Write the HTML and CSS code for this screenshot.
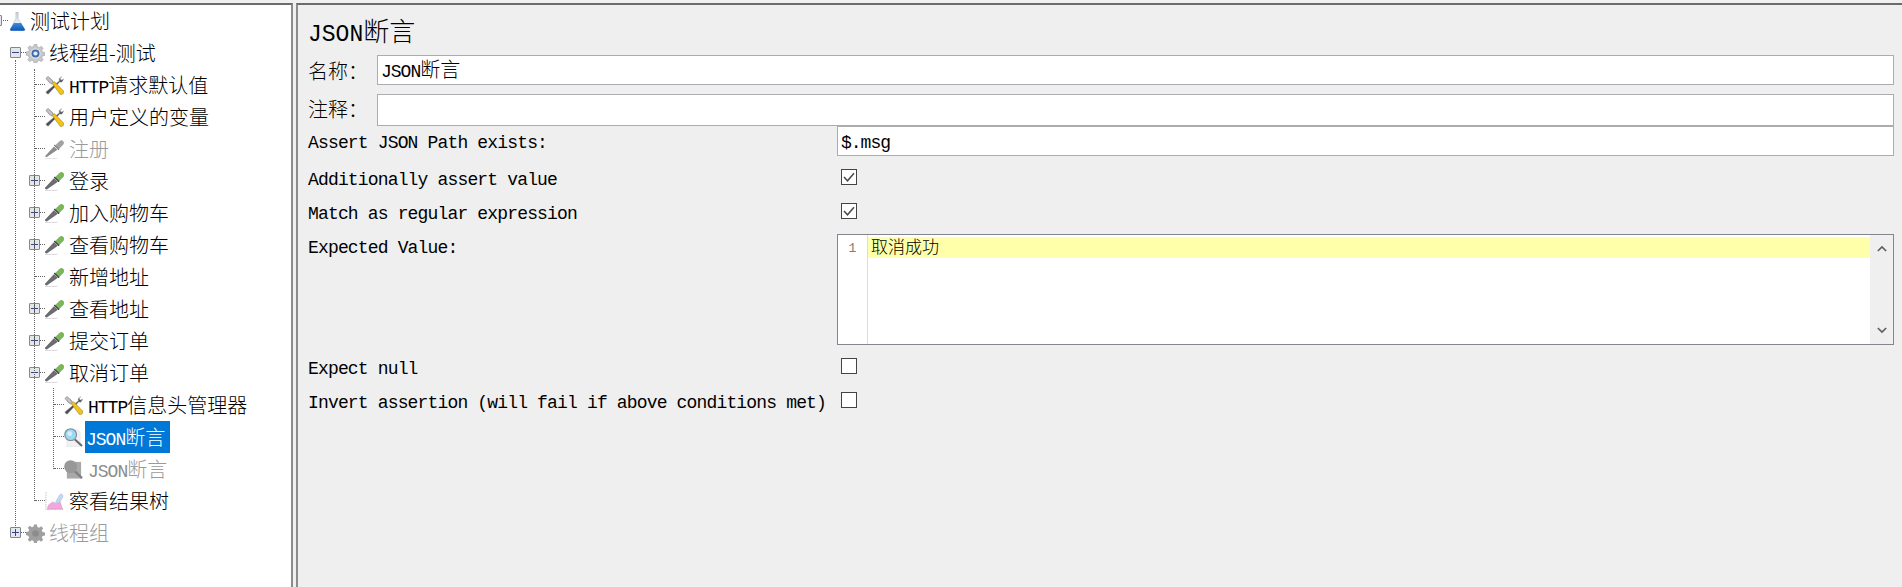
FILE: index.html
```html
<!DOCTYPE html>
<html lang="zh-CN">
<head>
<meta charset="utf-8">
<title>JSON断言</title>
<link rel="stylesheet" href="styles.css">
</head>
<body>
<svg class="defs" width="0" height="0" aria-hidden="true">
  <defs>
    <linearGradient id="glass" x1="0" y1="0" x2="0" y2="1"><stop offset="0" stop-color="#c9d0d8"/><stop offset=".55" stop-color="#e9edf2"/><stop offset="1" stop-color="#c6d6ea"/></linearGradient>
    <linearGradient id="liquid" x1="0" y1="0" x2="0" y2="1"><stop offset="0" stop-color="#3f8ce0"/><stop offset="1" stop-color="#0a55b8"/></linearGradient>
    <symbol id="flask" viewBox="0 0 20 20">
      <path d="M8.300 0h2.400v7l6.800 11q.6 1.600-1 1.800H3.500q-1.600-.2-1-1.800L8.300 7z" fill="url(#glass)" stroke="#a5afba" stroke-width=".5"/>
      <path d="M6.200 11.500h7.600l3.900 6.700q.4 1.500-1.200 1.600H3.500q-1.600-.1-1.200-1.600z" fill="url(#liquid)"/>
    </symbol>
    <symbol id="gear" viewBox="0 0 20 20">
      <path d="M8.500 .5h3l.5 2.600 1.800.8 2.200-1.500 2.100 2.100-1.500 2.200.8 1.800 2.600.5v3l-2.600.5-.8 1.800 1.500 2.200-2.100 2.100-2.200-1.500-1.800.8-.5 2.600h-3l-.5-2.600-1.800-.8-2.200 1.500-2.100-2.100 1.500-2.200-.8-1.800L0 11.500v-3l2.600-.5.800-1.800L1.900 4l2.100-2.100 2.200 1.500L8 2.600z" fill="#c6c6cc" stroke="#96969c" stroke-width=".5"/>
      <circle cx="10" cy="10" r="5.400" fill="#e4e6ea"/>
      <circle cx="10" cy="10" r="4.200" fill="#3f6db0"/>
      <circle cx="10" cy="10" r="2.200" fill="#e2eaf6"/>
    </symbol>
    <symbol id="gear-off" viewBox="0 0 20 20">
      <path d="M8.500 .5h3l.5 2.600 1.800.8 2.200-1.500 2.100 2.100-1.500 2.200.8 1.800 2.600.5v3l-2.600.5-.8 1.800 1.500 2.200-2.100 2.100-2.200-1.500-1.800.8-.5 2.600h-3l-.5-2.600-1.800-.8-2.200 1.500-2.100-2.100 1.500-2.200-.8-1.800L0 11.500v-3l2.600-.5.800-1.800L1.900 4l2.100-2.100 2.200 1.500L8 2.600z" fill="#a0a0a0"/>
      <circle cx="10" cy="10" r="3.500" fill="#8c8c8c"/>
    </symbol>
    <symbol id="tools" viewBox="0 0 20 20">
      <path d="M18 .5l-3.200 2.200.2 2.300L.8 16.800l.9 1.700 1.700.8L15.500 6.200l2.300.4L20 3l-2.700 1.300L16 3z" fill="#4f4f55" stroke="#c4c4c4" stroke-width=".5"/>
      <path d="M1 2.500L3.200.5l4.300 3.800 1.300 2.300-1.700 1.700-2.300-1.200z" fill="#c2c2c2" stroke="#5a5a5a" stroke-width=".5"/>
      <path d="M7.500 8L9.800 5.800 19.600 15.800q.6 1.800-.6 3t-3 .5z" fill="#f2c21c" stroke="#8c6e10" stroke-width=".5"/>
    </symbol>
    <symbol id="sampler" viewBox="0 0 20 20">
      <path d="M0 19.300q7 .6 13 0" fill="none" stroke="#d8d8d8" stroke-width="1"/>
      <path d="M.8 17.800l-.6-1L9.500 6.800l3.500 3.500L2 18z" fill="#6c6c72" stroke="#3c3c40" stroke-width=".5"/>
      <path d="M11 5.500L15.500 1q2-1.400 3.600.2t.2 3.600l-4.500 4.600z" fill="#7bb85a" stroke="#5c9040" stroke-width=".5"/>
      <path d="M9.800 5.200l5 5" stroke="#3c3c40" stroke-width="1.300"/>
    </symbol>
    <symbol id="sampler-off" viewBox="0 0 20 20">
      <path d="M0 19.300q7 .6 13 0" fill="none" stroke="#e4e4e4" stroke-width="1"/>
      <path d="M.8 17.800l-.6-1L9.500 6.800l3.500 3.500L2 18z" fill="#8c8c8c"/>
      <path d="M11 5.500L15.500 1q2-1.400 3.600.2t.2 3.600l-4.500 4.600z" fill="#a2a2a2"/>
      <path d="M9.800 5.200l5 5" stroke="#7c7c7c" stroke-width="1.300"/>
    </symbol>
    <symbol id="lens" viewBox="0 0 20 20">
      <path d="M3 2h12l2 2v15.500H3z" fill="#f1f1f4" stroke="#dedee2" stroke-width=".5"/>
      <path d="M11.500 12l7.500 7" stroke="#6a6a70" stroke-width="2.200"/>
      <circle cx="7" cy="7" r="6.200" fill="#9bd8f5" stroke="#7f8a92" stroke-width="1.200"/>
      <circle cx="6" cy="6" r="2.500" fill="#d8f1fd"/>
    </symbol>
    <symbol id="lens-off" viewBox="0 0 20 20">
      <path d="M3 2h15v17.500H3z" fill="#a8a8a8"/>
      <path d="M11.500 12l7.500 7" stroke="#808080" stroke-width="2.400"/>
      <circle cx="7" cy="7" r="6.800" fill="#989898"/>
    </symbol>
    <symbol id="chart" viewBox="0 0 20 20">
      <path d="M1 0v18.500h19" fill="none" stroke="#b0b0b0" stroke-width=".8" stroke-dasharray="1.500 1"/>
      <path d="M2.500 18l1-4 4.500-3.500 4 2 3-4.500 3.500 10z" fill="#f1a8dc" stroke="#d884c0" stroke-width=".5"/>
      <path d="M11 11l4.500-8q2-2 3 0t-1 4.500l-3.500 5z" fill="#c4d8f2" stroke="#96aed0" stroke-width=".5"/>
    </symbol>
  </defs>
</svg>

<div class="app">
  <nav class="tree">
    <i class="guide g-root"></i><i class="guide g-group"></i><i class="guide g-req"></i>

    <div class="row lv0"><span class="handle plus"></span><svg class="ico"><use href="#flask"/></svg><span class="txt">测试计划</span></div>
    <div class="row lv1"><span class="handle minus"></span><svg class="ico"><use href="#gear"/></svg><span class="txt">线程组-测试</span></div>
    <div class="row lv2 leaf"><svg class="ico"><use href="#tools"/></svg><span class="txt"><span class="lat">HTTP</span>请求默认值</span></div>
    <div class="row lv2 leaf"><svg class="ico"><use href="#tools"/></svg><span class="txt">用户定义的变量</span></div>
    <div class="row lv2 leaf off"><svg class="ico"><use href="#sampler-off"/></svg><span class="txt">注册</span></div>
    <div class="row lv2"><span class="handle plus"></span><svg class="ico"><use href="#sampler"/></svg><span class="txt">登录</span></div>
    <div class="row lv2"><span class="handle plus"></span><svg class="ico"><use href="#sampler"/></svg><span class="txt">加入购物车</span></div>
    <div class="row lv2"><span class="handle plus"></span><svg class="ico"><use href="#sampler"/></svg><span class="txt">查看购物车</span></div>
    <div class="row lv2 leaf"><svg class="ico"><use href="#sampler"/></svg><span class="txt">新增地址</span></div>
    <div class="row lv2"><span class="handle plus"></span><svg class="ico"><use href="#sampler"/></svg><span class="txt">查看地址</span></div>
    <div class="row lv2"><span class="handle plus"></span><svg class="ico"><use href="#sampler"/></svg><span class="txt">提交订单</span></div>
    <div class="row lv2"><span class="handle minus"></span><svg class="ico"><use href="#sampler"/></svg><span class="txt">取消订单</span></div>
    <div class="row lv3 leaf"><svg class="ico"><use href="#tools"/></svg><span class="txt"><span class="lat">HTTP</span>信息头管理器</span></div>
    <div class="row lv3 leaf"><svg class="ico"><use href="#lens"/></svg><span class="txt selected"><span class="lat">JSON</span>断言</span></div>
    <div class="row lv3 leaf off"><svg class="ico"><use href="#lens-off"/></svg><span class="txt"><span class="lat">JSON</span>断言</span></div>
    <div class="row lv2 leaf"><svg class="ico"><use href="#chart"/></svg><span class="txt">察看结果树</span></div>
    <div class="row lv1 off"><span class="handle plus"></span><svg class="ico"><use href="#gear-off"/></svg><span class="txt">线程组</span></div>
  </nav>

  <main class="panel">
    <h1 class="title"><span class="lat-big">JSON</span>断言</h1>
    <div class="named name-row"><label class="cap">名称：</label><div class="field"><span class="lat">JSON</span>断言</div></div>
    <div class="named comment-row"><label class="cap cap-up">注释：</label><div class="field"></div></div>
    <div class="prop path-row"><span class="plabel">Assert JSON Path exists:</span><div class="field"><span class="lat">$.msg</span></div></div>
    <div class="prop check-row"><span class="plabel">Additionally assert value</span><span class="check on"><svg viewBox="0 0 14 14"><path d="M2 7l3.500 3.800L12 3.200" fill="none" stroke="#4a4a4a" stroke-width="1.500"/></svg></span></div>
    <div class="prop check-row"><span class="plabel">Match as regular expression</span><span class="check on"><svg viewBox="0 0 14 14"><path d="M2 7l3.500 3.800L12 3.200" fill="none" stroke="#4a4a4a" stroke-width="1.500"/></svg></span></div>
    <div class="prop editor-row">
      <span class="plabel">Expected Value:</span>
      <div class="editor">
        <div class="gutter"><span class="lineno">1</span></div>
        <div class="code"><div class="curline">取消成功</div></div>
        <div class="vscroll">
          <svg viewBox="0 0 12 8"><path d="M1 7l5-5 5 5" fill="none" stroke="#5f5f5f" stroke-width="2"/></svg>
          <svg viewBox="0 0 12 8"><path d="M1 1l5 5 5-5" fill="none" stroke="#5f5f5f" stroke-width="2"/></svg>
        </div>
      </div>
    </div>
    <div class="prop check-row"><span class="plabel">Expect null</span><span class="check"></span></div>
    <div class="prop check-row"><span class="plabel">Invert assertion (will fail if above conditions met)</span><span class="check"></span></div>
  </main>
</div>
</body>
</html>
```

FILE: styles.css
```css
* { box-sizing: border-box; }
html, body { margin: 0; height: 100%; }
body {
  background: #f0f0f0;
  color: #000;
  font-family: "Noto Sans CJK SC", sans-serif;
  font-size: 20px;
  font-weight: 300;
  overflow: hidden;
}
.defs { position: absolute; }
.app {
  display: flex;
  height: 587px;
  padding-top: 3px;
}
.tree {
  position: relative;
  width: 293px;
  flex: none;
  background: #fff;
  border-top: 2px solid #6b6b6b;
  border-right: 2px solid #8c8c8c;
  overflow: hidden;
}
.panel {
  flex: 1;
  margin-left: 3px;
  background: #efefef;
  border-top: 2px solid #6b6b6b;
  border-left: 2px solid #8c8c8c;
  padding: 0 8px 0 10px;
}

/* tree */
.row {
  position: relative;
  display: flex;
  align-items: center;
  height: 32px;
  line-height: 32px;
  white-space: nowrap;
}
.lv0 { padding-left: 8px; }
.lv1 { padding-left: 26px; }
.lv2 { padding-left: 45px; }
.lv3 { padding-left: 64px; }
.ico { width: 19px; height: 19px; flex: none; }
.txt { margin-left: 4px; padding: 0 1px; height: 32px; }
.lv0 .txt { margin-left: 2px; }
.lv1 .txt { margin-left: 3px; }
.lat {
  font-family: "Liberation Mono", monospace;
  font-size: 18px;
  letter-spacing: -1px;
  font-weight: 400;
}
.off .txt { color: #9a9a9a; }
.off .lat { color: #8c8c8c; }
.selected { background: #0078d7; color: #fff; padding: 0 5px 0 1px; margin-left: 2px; }

.handle {
  position: absolute;
  top: 10px;
  width: 11px;
  height: 11px;
  background: #e6e6ea;
  border: 1px solid #85858d;
  border-radius: 1px;
}
.lv0 .handle { left: -9px; }
.lv1 .handle { left: 10px; }
.lv2 .handle { left: 29px; }
.handle::before {
  content: "";
  position: absolute;
  left: 1px; top: 4px;
  width: 7px; height: 1px;
  background: #2b4a86;
}
.plus::after {
  content: "";
  position: absolute;
  left: 4px; top: 1px;
  width: 1px; height: 7px;
  background: #2b4a86;
}
/* horizontal connector from the guide (or handle) to the icon */
.row::after {
  content: "";
  position: absolute;
  top: 15px;
  height: 0;
  width: 5px;
  border-top: 1px dotted #666;
}
.lv0::after { left: 3px; }
.lv1::after { left: 21px; }
.lv2::after { left: 40px; }
.lv3::after { left: 54px; width: 10px; }
.lv2.leaf::after { left: 35px; width: 10px; }

.guide {
  position: absolute;
  width: 0;
  border-left: 1px dotted #666;
  z-index: 1;
}
.g-root { left: 15px; top: 55px; height: 468px; }
.g-group { left: 34px; top: 64px; height: 432px; }
.g-req { left: 53px; top: 383px; height: 81px; }

/* form */
.title {
  margin: 0;
  height: 50px;
  padding-top: 8px;
  font-size: 26px;
  font-weight: 300;
  line-height: 34px;
}
.lat-big {
  font-family: "Liberation Mono", monospace;
  font-size: 23px;
  font-weight: 400;
}
.named { display: flex; align-items: center; }
.name-row { height: 30px; margin-bottom: 9px; }
.comment-row { height: 32px; }
.cap { width: 69px; flex: none; }
.cap-up { margin-bottom: 3px; }
.field {
  flex: 1;
  height: 100%;
  background: #fff;
  border: 1px solid #acacb0;
  padding-left: 3px;
  line-height: 26px;
}
.prop { display: flex; align-items: flex-start; }
.plabel {
  flex: none;
  width: 529px;
  font-family: "Liberation Mono", monospace;
  font-size: 18px;
  letter-spacing: -0.84px;
  font-weight: 400;
  white-space: nowrap;
}
.path-row { height: 30px; margin-bottom: 4px; }
.path-row .plabel { line-height: 30px; margin-top: 2px; }
.check-row { height: 34px; align-items: center; }
.check-row .plabel { padding-top: 5px; }
.check {
  display: block;
  width: 16px;
  height: 16px;
  margin-left: 4px;
  background: #fff;
  border: 1px solid #444;
}
.check svg { display: block; width: 14px; height: 14px; }

.editor-row { height: 111px; margin-top: 6px; margin-bottom: 4px; }
.editor-row .plabel { line-height: 28px; }
.editor {
  flex: 1;
  display: flex;
  height: 111px;
  background: #fff;
  border: 1px solid #85858f;
}
.gutter {
  width: 30px;
  flex: none;
  border-right: 1px solid #dcdcdc;
  text-align: center;
  padding-top: 3px;
}
.lineno {
  font-family: "Liberation Mono", monospace;
  font-size: 13px;
  font-weight: 400;
  color: #8a7a68;
  line-height: 21px;
  display: block;
}
.code { flex: 1; padding-top: 2px; }
.curline {
  height: 21px;
  background: #ffffaa;
  font-size: 17px;
  line-height: 18px;
  padding-left: 3px;
}
.vscroll {
  width: 23px;
  flex: none;
  background: #efefef;
  display: flex;
  flex-direction: column;
  justify-content: space-between;
  align-items: center;
  padding: 10px 0;
}
.vscroll svg { display: block; width: 10px; height: 7px; }
```
